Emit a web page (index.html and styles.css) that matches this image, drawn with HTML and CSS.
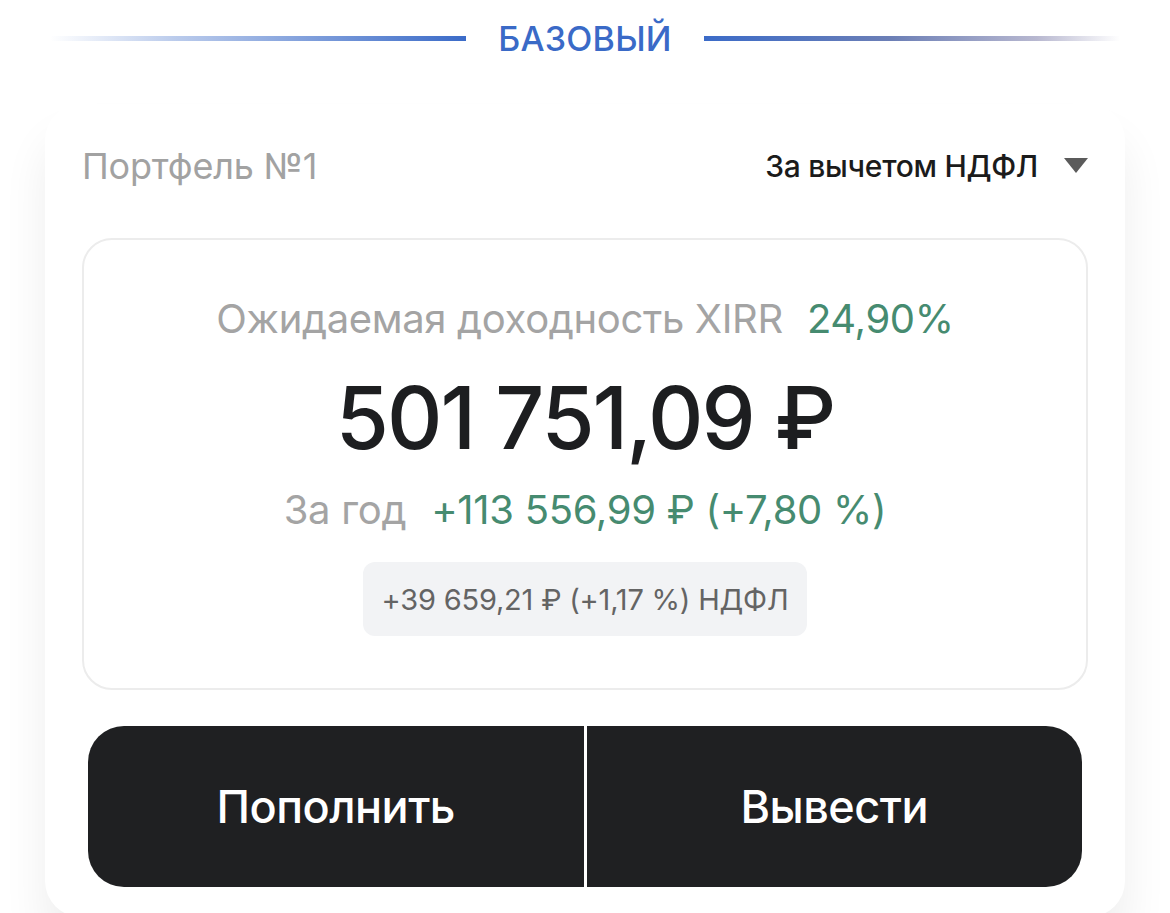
FILE: index.html
```html
<!DOCTYPE html>
<html lang="ru">
<head>
<meta charset="utf-8">
<title>Портфель</title>
<link rel="stylesheet" href="styles.css">
</head>
<body>
<div class="page">
  <header class="tier">
    <span class="tier-line tier-line-left"></span>
    <span class="tier-name">БАЗОВЫЙ</span>
    <span class="tier-line tier-line-right"></span>
  </header>

  <section class="card">
    <div class="card-head">
      <span class="portfolio-name">Портфель №1</span>
      <button class="tax-select">
        <span>За вычетом НДФЛ</span>
        <svg class="tax-caret" width="24" height="15" viewBox="0 0 24 15"><path d="M0 0 H24 L12 15 Z" fill="#5b5b5b"/></svg>
      </button>
    </div>

    <div class="summary">
      <div class="xirr">
        <span class="muted">Ожидаемая доходность XIRR</span>
        <span class="positive">24,90%</span>
      </div>
      <div class="total">501 751,09 ₽</div>
      <div class="year">
        <span class="muted">За год</span>
        <span class="positive">+113 556,99 ₽ (+7,80 %)</span>
      </div>
      <div class="tax-badge">+39 659,21 ₽ (+1,17 %) НДФЛ</div>
    </div>

    <div class="actions">
      <button class="action action-left">Пополнить</button>
      <button class="action action-right">Вывести</button>
    </div>
  </section>
</div>
</body>
</html>
```

FILE: styles.css
```css
* { box-sizing: border-box; }

html, body {
  margin: 0;
  padding: 0;
  background: #ffffff;
}

body {
  font-family: "Inter", "Noto Sans", sans-serif;
  color: #1e1f21;
  width: 1170px;
  height: 913px;
  overflow: hidden;
}

.page {
  width: 1170px;
}

.tier {
  height: 76px;
  display: flex;
  align-items: center;
  gap: 32px;
  padding: 0 50px;
}

.tier-line {
  flex: 1;
  height: 5px;
}

.tier-line-left {
  background: linear-gradient(90deg, rgba(59,107,200,0) 0%, rgba(59,107,200,0.35) 30%, #3b6bc8 100%);
}

.tier-line-right {
  background: linear-gradient(90deg, #3b6bc8 0%, #6c7fb6 45%, #b8b8d0 80%, rgba(210,210,225,0) 100%);
}

.tier-name {
  font-size: 34px;
  font-weight: 500;
  color: #3a6ac7;
  letter-spacing: 0.2px;
}

.card {
  margin: 28px 0 0 45px;
  width: 1080px;
  background: #ffffff;
  border-radius: 36px;
  box-shadow: 0 34px 46px rgba(0, 0, 0, 0.07);
  padding: 42px 37px 30px;
}

.card-head {
  height: 40px;
  display: flex;
  align-items: center;
  justify-content: space-between;
}

.portfolio-name {
  font-size: 36px;
  color: #a2a2a2;
  letter-spacing: -0.2px;
}

.tax-select {
  display: flex;
  align-items: center;
  gap: 26px;
  border: none;
  background: none;
  padding: 0;
  font-family: inherit;
  font-size: 30px;
  font-weight: 500;
  color: #1b1b1b;
  letter-spacing: -0.3px;
}

.tax-caret {
  display: block;
  margin-top: -2px;
}

.summary {
  margin-top: 52px;
  height: 452px;
  border: 2px solid #ececec;
  border-radius: 30px;
  display: flex;
  flex-direction: column;
  align-items: center;
  padding-top: 55px;
}

.muted { color: #a4a4a4; }
.positive { color: #468b70; }

.xirr {
  display: flex;
  gap: 24px;
  font-size: 40px;
  line-height: 48px;
  letter-spacing: -0.35px;
}

.total {
  margin-top: 25px;
  font-size: 86px;
  line-height: 100px;
  font-weight: 500;
  color: #1d1e20;
  letter-spacing: -2px;
}

.year {
  margin-top: 18px;
  display: flex;
  gap: 25px;
  font-size: 40px;
  line-height: 48px;
  letter-spacing: -0.3px;
}

.tax-badge {
  margin-top: 28px;
  height: 74px;
  padding: 0 19px;
  display: flex;
  align-items: center;
  background: #f2f3f5;
  border-radius: 12px;
  font-size: 29px;
  color: #646464;
  letter-spacing: -0.2px;
}

.actions {
  margin: 36px 6px 0;
  height: 161px;
  display: flex;
  gap: 3px;
}

.action {
  flex: 1;
  border: none;
  background: #1f2022;
  color: #ffffff;
  font-family: inherit;
  font-size: 45px;
  font-weight: 500;
  letter-spacing: -0.5px;
}

.action-left { border-radius: 36px 0 0 36px; }
.action-right { border-radius: 0 36px 36px 0; }
```
